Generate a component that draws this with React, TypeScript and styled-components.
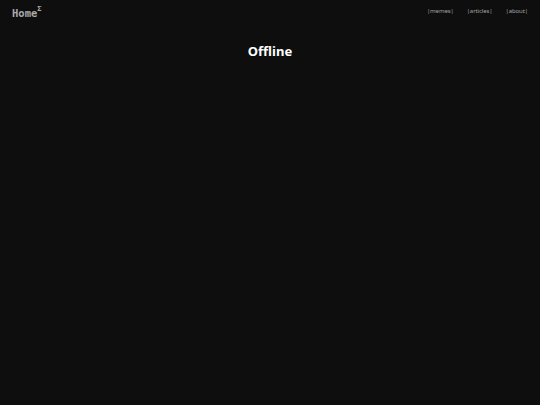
import React from 'react';
import styled, { createGlobalStyle } from 'styled-components';

const Global = createGlobalStyle`
  html, body {
    margin: 0;
    padding: 0;
    background: #0e0e0e;
  }
`;

const Page = styled.div`
  width: 540px;
  min-height: 405px;
  background: #0e0e0e;
  color: #fff;
  font-family: "Noto Sans", sans-serif;
`;

const Header = styled.header`
  display: flex;
  align-items: center;
  justify-content: space-between;
  padding: 3px 12px 0 12px;
  height: 18px;
`;

const Logo = styled.div`
  font-family: "DejaVu Sans Mono", monospace;
  font-weight: bold;
  font-size: 10.5px;
  color: #a9a9a9;
  sup {
    font-size: 7px;
    position: relative;
    top: -1px;
  }
`;

const Nav = styled.nav`
  display: flex;
  gap: 13px;
  margin-top: -2px;
`;

const NavLink = styled.span`
  font-family: "Noto Sans", sans-serif;
  font-size: 6px;
  letter-spacing: -0.1px;
  color: #a4a4a4;
`;

const Title = styled.h1`
  margin: 21px 0 0 0;
  text-align: center;
  font-family: "Noto Sans", sans-serif;
  font-weight: bold;
  font-size: 13px;
  color: #fff;
`;

export default function App() {
  return (
    <Page>
      <Global />
      <Header>
        <Logo>
          Home<sup>Σ</sup>
        </Logo>
        <Nav>
          <NavLink>|memes|</NavLink>
          <NavLink>|articles|</NavLink>
          <NavLink>|about|</NavLink>
        </Nav>
      </Header>
      <Title>Offline</Title>
    </Page>
  );
}
